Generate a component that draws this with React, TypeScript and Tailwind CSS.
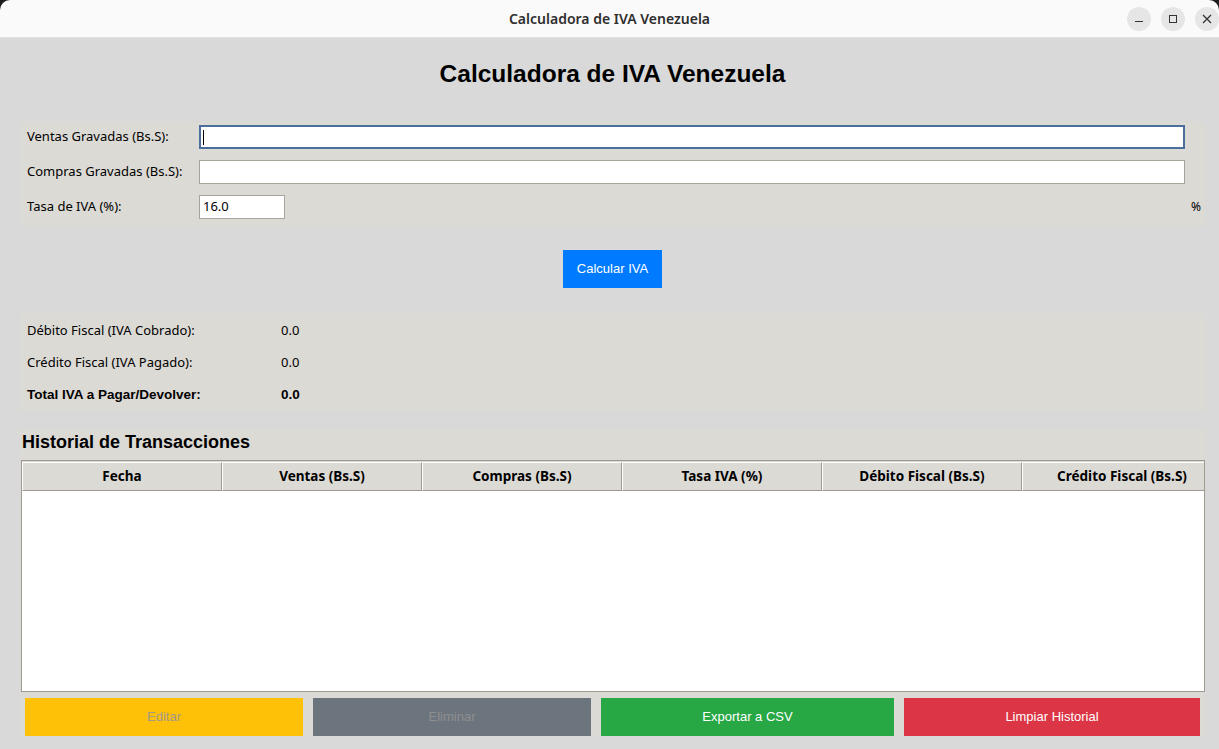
const columns = ["Fecha", "Ventas (Bs.S)", "Compras (Bs.S)", "Tasa IVA (%)", "Débito Fiscal (Bs.S)", "Crédito Fiscal (Bs.S)"];

function TitleBar() {
  return (
    <div className="relative h-[38px] bg-[#fafafa] rounded-t-[10px] border-b border-[#e2e2e2] flex items-center justify-center">
      <span className="text-[14px] font-semibold text-[#2e2e2e] font-['Noto_Sans',sans-serif]">Calculadora de IVA Venezuela</span>
      <div className="absolute right-0 top-[7px] flex gap-[10px]">
        <div className="w-[24px] h-[24px] rounded-full bg-[#e6e6e6] flex items-center justify-center">
          <div className="w-[8px] h-[1px] bg-[#333] mt-[5px]" />
        </div>
        <div className="w-[24px] h-[24px] rounded-full bg-[#e6e6e6] flex items-center justify-center">
          <div className="w-[8px] h-[8px] border border-[#333]" />
        </div>
        <div className="w-[24px] h-[24px] rounded-full bg-[#e6e6e6] flex items-center justify-center">
          <svg width="10" height="10" viewBox="0 0 10 10">
            <path d="M1 1L9 9M9 1L1 9" stroke="#333" strokeWidth="1.3" />
          </svg>
        </div>
      </div>
    </div>
  );
}

function FormRow({ label, focused }: { label: string; focused?: boolean }) {
  return (
    <div className="flex items-center h-[24px]">
      <span className="w-[172px] pl-[7px] box-content text-[13px] text-black">{label}</span>
      <div
        className={
          "w-[986px] h-[24px] bg-white " +
          (focused ? "border-2 border-[#4a6f9c] flex items-center pl-[2px]" : "border border-[#a7a49c]")
        }
      >
        {focused && <div className="w-[1px] h-[15px] bg-black" />}
      </div>
    </div>
  );
}

export default function App() {
  return (
    <div className="w-[1219px] h-[749px] bg-[#1e1e1e] overflow-hidden font-['Noto_Sans',sans-serif]">
      <TitleBar />
      <div className="h-[711px] bg-[#d9d9d9] pl-[20px] pr-[14px] flex flex-col">
        <div className="h-[72px] flex items-center justify-center">
          <h1 className="text-[24.5px] font-bold text-black font-['Liberation_Sans',sans-serif]">Calculadora de IVA Venezuela</h1>
        </div>

        <div className="mt-[12px] bg-[#dcdad5] pt-[3px] pb-[7px] flex flex-col gap-[11px]">
          <FormRow label="Ventas Gravadas (Bs.S):" focused />
          <FormRow label="Compras Gravadas (Bs.S):" />
          <div className="flex items-center h-[24px]">
            <span className="w-[172px] pl-[7px] box-content text-[13px] text-black">Tasa de IVA (%):</span>
            <div className="w-[86px] h-[24px] bg-white border border-[#a7a49c] flex items-center pl-[3px] text-[13px] text-black">16.0</div>
            <span className="ml-auto mr-[4px] text-[12px] text-black">%</span>
          </div>
        </div>

        <div className="mt-[24px] flex justify-center">
          <div className="w-[99px] h-[38px] bg-[#007bff] text-white text-[13px] font-['Liberation_Sans',sans-serif] flex items-center justify-center">
            Calcular IVA
          </div>
        </div>

        <div className="mt-[25px] bg-[#dcdad5] pt-[2px] flex flex-col text-[13px] text-black">
          <div className="h-[32px] flex items-center">
            <span className="w-[261px] pl-[7px]">Débito Fiscal (IVA Cobrado):</span>
            <span>0.0</span>
          </div>
          <div className="h-[32px] flex items-center">
            <span className="w-[261px] pl-[7px]">Crédito Fiscal (IVA Pagado):</span>
            <span>0.0</span>
          </div>
          <div className="h-[32px] flex items-center font-bold text-[13.5px] font-['Liberation_Sans',sans-serif]">
            <span className="w-[261px] pl-[7px]">Total IVA a Pagar/Devolver:</span>
            <span>0.0</span>
          </div>
        </div>

        <div className="mt-[18px] bg-[#dcdad5] flex flex-col">
          <div className="h-[26px] flex items-center pl-[2px]">
            <h2 className="text-[18px] font-bold text-black font-['Liberation_Sans',sans-serif]">Historial de Transacciones</h2>
          </div>
          <div className="mt-[5px] ml-[1px] h-[232px] border border-[#9e9a91] bg-white flex flex-col overflow-hidden">
            <div className="flex bg-[#dcdad5] h-[30px] pt-[1px] shrink-0">
              {columns.map((c) => (
                <div
                  key={c}
                  className="w-[200px] shrink-0 border border-[#9e9a91] border-t-white border-l-white bg-[#dcdad5] flex items-center justify-center text-[13.5px] font-bold text-black"
                >
                  {c}
                </div>
              ))}
            </div>
            <div className="flex-1 bg-white" />
          </div>
          <div className="mt-[6px] pl-[5px] flex gap-[10px] font-['Liberation_Sans',sans-serif] text-[13px]">
            <div className="w-[278px] h-[38px] bg-[#ffc107] text-[#a39a8a] flex items-center justify-center">Editar</div>
            <div className="w-[278px] h-[38px] bg-[#6c757d] text-[#8f8f8f] flex items-center justify-center">Eliminar</div>
            <div className="w-[293px] h-[38px] bg-[#28a745] text-white flex items-center justify-center">Exportar a CSV</div>
            <div className="w-[296px] h-[38px] bg-[#dc3545] text-white flex items-center justify-center">Limpiar Historial</div>
          </div>
        </div>
      </div>
    </div>
  );
}
